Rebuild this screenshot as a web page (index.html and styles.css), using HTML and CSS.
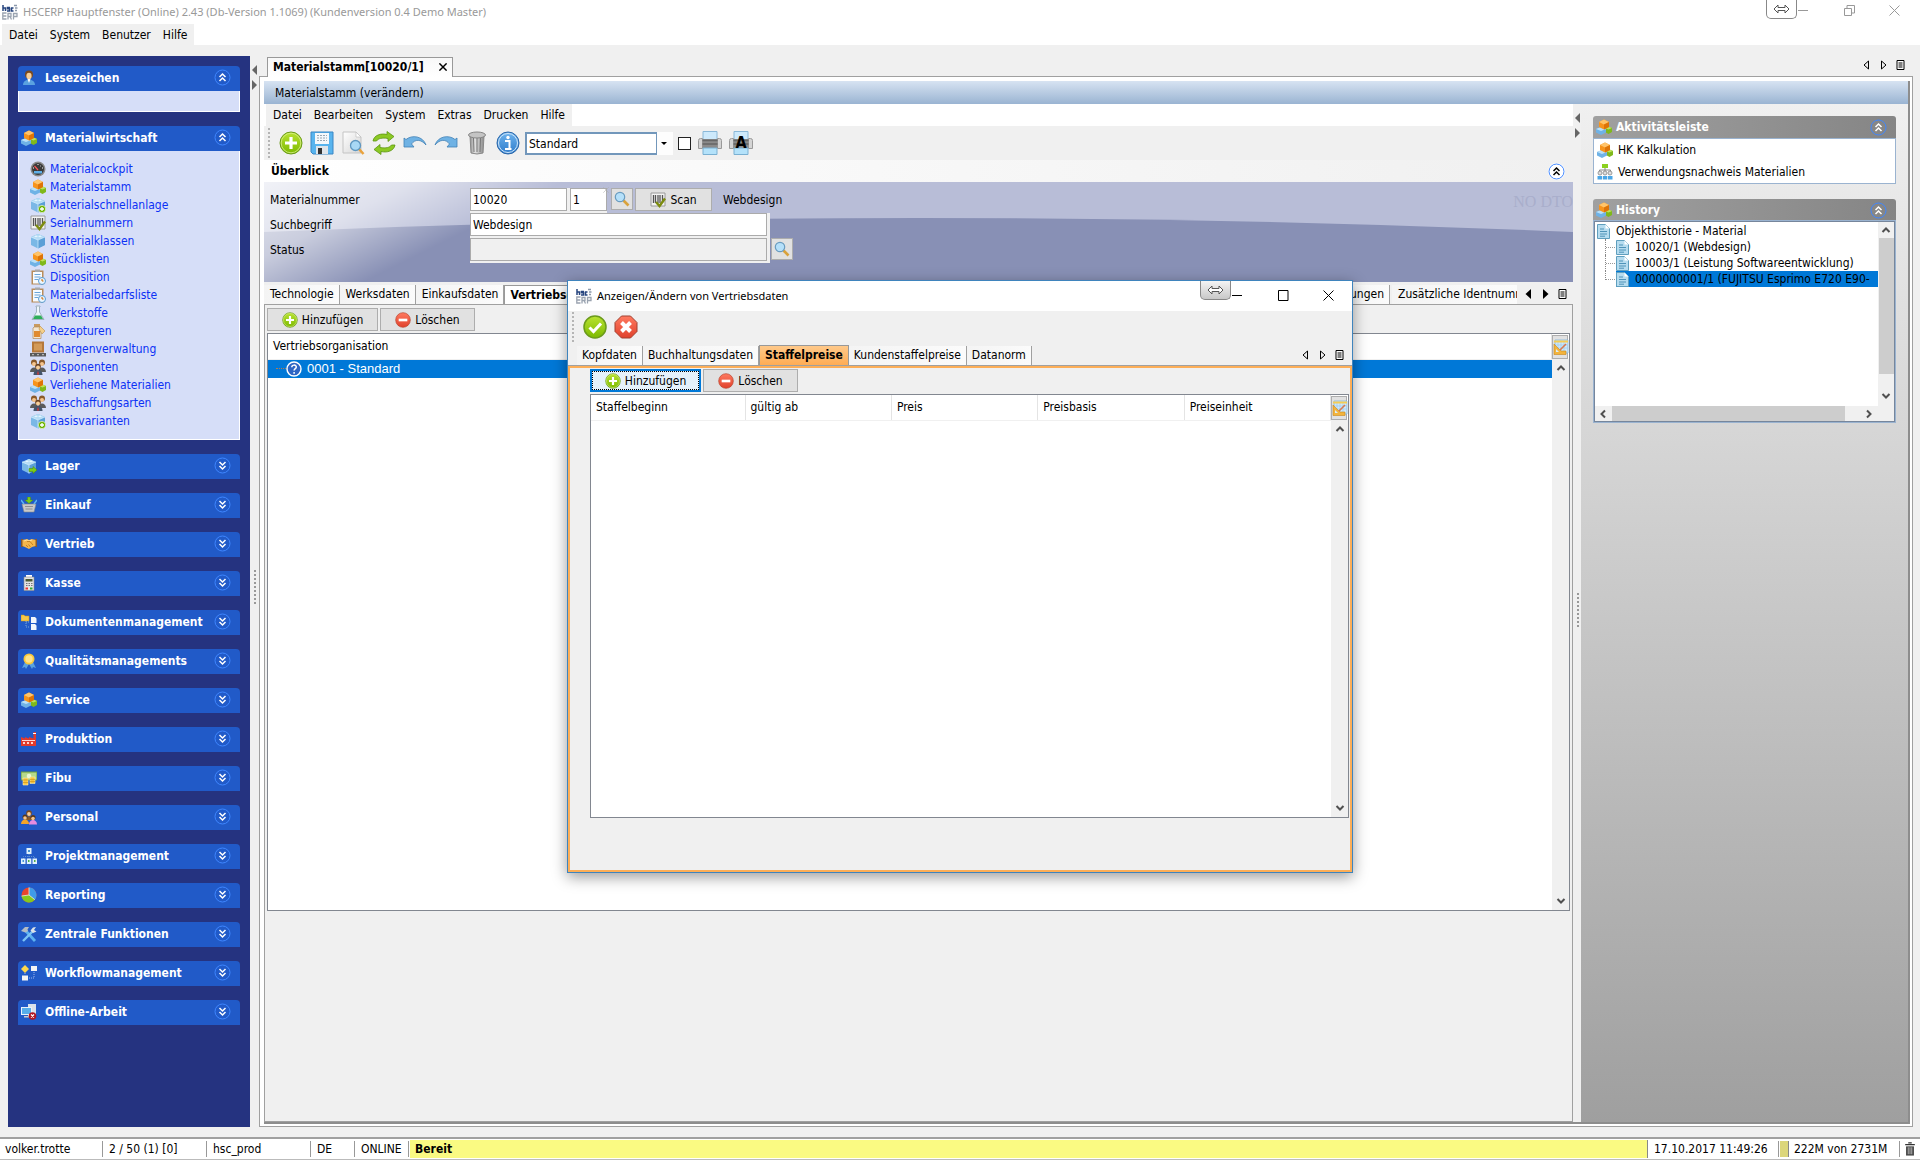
FILE: index.html
```html
<!DOCTYPE html>
<html lang="de">
<head>
<meta charset="utf-8">
<title>HSCERP Hauptfenster</title>
<link rel="stylesheet" href="styles.css">
</head>
<body>
<svg class="defs" width="0" height="0" aria-hidden="true">
  <defs>
    <linearGradient id="gGreen" x1="0" y1="0" x2="0" y2="1"><stop offset="0" stop-color="#b9e332"/><stop offset="1" stop-color="#7cb900"/></linearGradient>
    <linearGradient id="gRed" x1="0" y1="0" x2="0" y2="1"><stop offset="0" stop-color="#ff7a60"/><stop offset="1" stop-color="#e0412c"/></linearGradient>
    <linearGradient id="gBlue" x1="0" y1="0" x2="0" y2="1"><stop offset="0" stop-color="#6fb4ee"/><stop offset="1" stop-color="#2f7ccb"/></linearGradient>
    <linearGradient id="gMetal" x1="0" y1="0" x2="1" y2="0"><stop offset="0" stop-color="#8c8c8c"/><stop offset=".35" stop-color="#e4e4e4"/><stop offset="1" stop-color="#8a8a8a"/></linearGradient>
    <linearGradient id="gPage" x1="0" y1="0" x2="1" y2="1"><stop offset="0" stop-color="#fff"/><stop offset="1" stop-color="#d5d5d5"/></linearGradient>
    <linearGradient id="gFade" gradientUnits="userSpaceOnUse" x1="0" y1="0" x2="60" y2="120"><stop offset="0" stop-color="#fff" stop-opacity=".8"/><stop offset=".5" stop-color="#fff" stop-opacity=".55"/><stop offset="1" stop-color="#fff" stop-opacity="0"/></linearGradient>
  </defs>
  <symbol id="cube" viewBox="0 0 16 16"><path d="M1 4l7-3 7 3v8l-7 3.500-7-3.500z" fill="#7ab8e6"/><path d="M1 4l7-3 7 3-7 3z" fill="#b5dcf5"/><path d="M8 7l7-3v8l-7 3.500z" fill="#5b9fd6"/><path d="M1 4l7 3v8.500M8 7l7-3" stroke="#d9f0ff" stroke-width=".7" fill="none"/><path d="M4 3.500l2-1 2 .8-2 1zM8 3.500l2-1 2 .8-2 1z" fill="#e4f5ff"/></symbol>
  <symbol id="blocks" viewBox="0 0 16 16"><path d="M9 9l3.500-1.500L16 9v4l-3.500 2L9 13z" fill="#7fb81c"/><path d="M9 9l3.500-1.500L16 9l-3.500 1.500z" fill="#bde35a"/><path d="M0 10l5-2 5 2v3.500L5 16l-5-2.500z" fill="#6fb2e6"/><path d="M0 10l5-2 5 2-5 2z" fill="#b9e0f8"/><path d="M3 3l5-2.500L13 3v5l-5 2.500L3 8z" fill="#f7941d"/><path d="M3 3l5-2.500L13 3 8 5.500z" fill="#ffc46b"/><path d="M8 5.500L13 3v5l-5 2.500z" fill="#dd7408"/></symbol>
  <symbol id="cubeplus" viewBox="0 0 16 16"><use href="#cube"/><circle cx="12" cy="12" r="3.700" fill="#6cb300" stroke="#fff" stroke-width=".6"/><path d="M12 10v4M10 12h4" stroke="#fff" stroke-width="1.300"/></symbol>
  <symbol id="cubearrow" viewBox="0 0 16 16"><use href="#cube"/><path d="M8 10.500h4V8.500L16 12l-4 3.500v-2H8z" fill="#7ccc1a" stroke="#4c8a00" stroke-width=".5"/></symbol>
  <symbol id="gauge" viewBox="0 0 16 16"><circle cx="8" cy="8" r="7.500" fill="#8a8a8a"/><circle cx="8" cy="8" r="6" fill="#3a3a3a"/><path d="M4 10h8v2.500H4z" fill="#5fb0e8"/><path d="M8 9L4.500 5" stroke="#f55" stroke-width="1.200"/><path d="M3 7h1M12 7h1M8 3v1M11 4.500l-.6.600" stroke="#fff"/></symbol>
  <symbol id="barcode" viewBox="0 0 16 16"><path d="M1 1h14v13H1z" fill="#f3f3f3" stroke="#9a9a9a"/><path d="M3.500 3v8M5.500 3v8M8 3v8M10 3v8M12.500 3v8" stroke="#555" stroke-width="1.300"/><path d="M6 10l3.500 4L15 6.500" fill="none" stroke="#7d8c10" stroke-width="2.400"/></symbol>
  <symbol id="clip" viewBox="0 0 16 16"><path d="M1.500 1.500h12v14h-12z" fill="#b98d5a"/><path d="M3 3h9v11.500H3z" fill="#f6fbff"/><path d="M5 .5h5V3H5z" fill="#a9a9a9"/><path d="M4.500 5.500h6M4.500 8h6M4.500 10.500h4" stroke="#6aa5d8"/><circle cx="12" cy="12" r="3.500" fill="#eaf6ff" stroke="#5a9bd0"/><path d="M12 10v2h1.500" stroke="#c60" fill="none"/></symbol>
  <symbol id="flask" viewBox="0 0 16 16"><path d="M6 1h4v1H9.500v5L14 14.500H2L6.500 7V2H6z" fill="#eef6fb" stroke="#8fa3b0" stroke-width=".8"/><path d="M5 10.500h6l2 3.500H3z" fill="#2fae5a"/></symbol>
  <symbol id="bottle" viewBox="0 0 16 16"><path d="M4 1h6v3H4z" fill="#c99a60"/><path d="M3 5l1-1h6l1 1v10.500H3z" fill="#f4e6d0" stroke="#b08a5a" stroke-width=".7"/><path d="M4 8h6v6H4z" fill="#e08a30"/><path d="M10 3l5 5-3 3-3-5z" fill="#f3cf8a" stroke="#b98d4a" stroke-width=".6"/></symbol>
  <symbol id="crate" viewBox="0 0 16 16"><path d="M2 .5h12v11H2z" fill="#b5783a"/><path d="M4 2.500h8v7H4z" fill="#d39a58"/><path d="M0 12h16v3.500H0z" fill="#5a5a5a"/><path d="M2 13.700h2M7 13.700h2M12 13.700h2" stroke="#ccc"/></symbol>
  <symbol id="people" viewBox="0 0 16 16"><circle cx="4" cy="3.500" r="3" fill="#8a5a2a"/><circle cx="12" cy="3.500" r="3" fill="#8a5a2a"/><circle cx="4" cy="5" r="2" fill="#f6c58d"/><circle cx="12" cy="5" r="2" fill="#f6c58d"/><path d="M0 13c0-6 8-6 8 0zM8 13c0-6 8-6 8 0z" fill="#5b5b5b"/><circle cx="8" cy="7.500" r="2.800" fill="#6b4220"/><circle cx="8" cy="8.500" r="2" fill="#f8cf9a"/><path d="M3.500 16c0-7 9-7 9 0z" fill="#44546a"/><path d="M8 11.500l1 4H7z" fill="#d33"/></symbol>
  <symbol id="staff" viewBox="0 0 16 16"><circle cx="8" cy="4" r="2.800" fill="#7a4a20"/><circle cx="8" cy="5" r="1.900" fill="#f8cf9a"/><path d="M4 11c0-5 8-5 8 0z" fill="#8a5a2a"/><circle cx="4" cy="8" r="2.500" fill="#5a3818"/><circle cx="4" cy="9" r="1.800" fill="#f6c58d"/><path d="M0 15c0-6 8-6 8 0z" fill="#f2a428"/><circle cx="12" cy="8.500" r="2.500" fill="#5a3818"/><circle cx="12" cy="9.500" r="1.800" fill="#f6c58d"/><path d="M8 15.500c0-6 8-6 8 0z" fill="#e58be0"/></symbol>
  <symbol id="user" viewBox="0 0 16 16"><path d="M2 15c0-7 12-7 12 0z" fill="#5aa2e0"/><path d="M6.500 9h3L8 13z" fill="#fff"/><circle cx="8" cy="4.500" r="4" fill="#7a4a20"/><ellipse cx="8" cy="6" rx="2.600" ry="3.200" fill="#f8cf9a"/></symbol>
  <symbol id="basket" viewBox="0 0 16 16"><path d="M1 7h14l-2 8H3z" fill="#c9c9c9" stroke="#888" stroke-width=".6"/><path d="M4 9.500h8M4.500 12h7" stroke="#8f8f8f"/><path d="M0 3l3 4M16 3l-3 4" stroke="#5cb4f0" stroke-width="1.500"/><path d="M6.500 0h3v3H12L8 6.500 4 3h2.500z" fill="#7ccc1a" stroke="#4c8a00" stroke-width=".4"/></symbol>
  <symbol id="hands" viewBox="0 0 16 16"><path d="M0 3h2v8H0zM14 3h2v8h-2z" fill="#8a5a2a"/><path d="M1.500 4l4.500-1 2 1 3-1 3.500 1v6l-3.500 1-3 2L5 11.500l-3.500-1.500z" fill="#f5b64c"/><path d="M3 5l3-1 2 1 3-1" stroke="#ffe0a0" fill="none"/><path d="M6 5.500h3l3 3.500M5 9l2 2M7.500 8.500L9.500 11" stroke="#b9751a" fill="none" stroke-width=".8"/></symbol>
  <symbol id="till" viewBox="0 0 16 16"><path d="M5 0h6v3H5z" fill="#fff"/><path d="M3 2h10v13.500H3z" fill="#e4e4e4" stroke="#888" stroke-width=".6"/><path d="M4.500 4h7v2.500h-7z" fill="#4c5a35"/><path d="M5 8.500h1.500M7.500 8.500H9M10 8.500h1.500M5 10.500h1.500M7.500 10.500H9M10 10.500h1.500" stroke="#777"/><path d="M4.500 12.500H7v2H4.500z" fill="#e33"/><path d="M9 12.500h2.500v2H9z" fill="#3a3"/></symbol>
  <symbol id="docs" viewBox="0 0 16 16"><path d="M0 1h3l1 1h4v5H0z" fill="#f7c948" stroke="#c9971c" stroke-width=".5"/><path d="M5 7v6h4M5 8h4" stroke="#7aa7d8" stroke-dasharray="1 1" fill="none"/><path d="M10 3h4l1.500 1.500V9H10zM10 10h4l1.500 1.500V16H10z" fill="#f2f6fb"/></symbol>
  <symbol id="medal" viewBox="0 0 16 16"><path d="M4 9L1 15l3-1 1 2 3-5zM12 9l3 6-3-1-1 2-3-5z" fill="#5aa2e0"/><circle cx="8" cy="6" r="5.500" fill="#f9c83a"/><circle cx="8" cy="6" r="3.700" fill="#ffe38a"/></symbol>
  <symbol id="factory" viewBox="0 0 16 16"><path d="M0 15V6l4 1.500V6l4 1.500V6l4.500 1.500V1H15v14z" fill="#e23a2c"/><path d="M1 9.500h13" stroke="#fff" stroke-width=".8"/><path d="M2 11h2v2H2zM6 11h2v2H6zM10 11h2v2h-2z" fill="#ffd2cc"/><path d="M12 2.500h3" stroke="#fff"/></symbol>
  <symbol id="money" viewBox="0 0 16 16"><path d="M0 2h16v8H0z" fill="#b5d98a" stroke="#6b9a3a"/><circle cx="8" cy="6" r="2.300" fill="#e9f6d5"/><path d="M2 8h5v7H2zM9 7h5v6.500H9z" fill="#f6c341" stroke="#fff0b0" stroke-width=".6"/><path d="M2 10h5M2 12.500h5M9 9.500h5M9 11.500h5" stroke="#c98d12" stroke-width=".6"/></symbol>
  <symbol id="tree" viewBox="0 0 16 16"><path d="M8 6v3M2.500 11V8.500h11V11M8 8v3" stroke="#5f8fd0" stroke-dasharray="1 1" fill="none"/><path d="M5.500 0h5v6h-5zM0 10.500h4.500V16H0zM5.800 10.500h4.500V16H5.800zM11.500 10.500H16V16h-4.500z" fill="#dff0fb"/><path d="M7 2h2v2H7zM1.500 12H3v2H1.500z" fill="#4a97d6"/><path d="M7 12h1.500v2H7zM13 12h1.500v2H13z" fill="#4fae4a"/></symbol>
  <symbol id="pie" viewBox="0 0 16 16"><circle cx="8" cy="8" r="7.500" fill="#e8442e"/><path d="M8 8V.5a7.500 7.500 0 015.800 12.200z" fill="#3f9be8"/><path d="M8 8l5.800 4.700A7.500 7.500 0 01.6 9z" fill="#85c81e"/><path d="M8 .5V8l5.800 4.700M8 8L.6 9" stroke="#e8f2e0" stroke-width=".8" fill="none"/></symbol>
  <symbol id="tools" viewBox="0 0 16 16"><path d="M4 4l10 11" stroke="#5db2f0" stroke-width="2.800"/><path d="M12 5L2 15" stroke="#7cc4f5" stroke-width="2.400"/><path d="M0 5l4-4h4L6.500 3.500 7 5 4.500 6.500z" fill="#b4bcc4"/><path d="M15 1l-3 .5-2.500 3L12 7l3.500-1.500L13 4z" fill="#dde3e8"/></symbol>
  <symbol id="flow" viewBox="0 0 16 16"><path d="M4 0l4 4-4 4-4-4z" fill="#ffd84a"/><path d="M10 1h6v5h-6zM1 10.500h6v5H1z" fill="#f4f4f4"/><path d="M4 8v2M13 7v6H8" stroke="#9fb6e8" stroke-dasharray="1 1" fill="none"/></symbol>
  <symbol id="offline" viewBox="0 0 16 16"><path d="M7 0h8v13H7z" fill="#d9e2ea"/><path d="M0 3h11v8H0z" fill="#e9f2fa"/><path d="M1 4h9v6H1z" fill="#58aeea"/><path d="M3 12h5v1.500H3z" fill="#ccc"/><circle cx="11.500" cy="12" r="3.800" fill="#b01722"/><path d="M10 10.500l3 3m0-3l-3 3" stroke="#fff" stroke-width="1.200"/></symbol>
  <symbol id="org" viewBox="0 0 16 16"><path d="M5 0h6v4H5z" fill="#8bd01e"/><path d="M2.500 9V6h11v3M8 4v5" stroke="#888" fill="none"/><circle cx="3" cy="9" r="2" fill="#ddd" stroke="#888" stroke-width=".8"/><circle cx="8" cy="9" r="2" fill="#ddd" stroke="#888" stroke-width=".8"/><circle cx="13" cy="9" r="2" fill="#ddd" stroke="#888" stroke-width=".8"/><path d="M.5 12h4.500v3.500H.5zM5.800 12h4.500v3.500H5.800zM11 12h4.500v3.500H11z" fill="#4aa6e6"/></symbol>
  <symbol id="page" viewBox="0 0 13 15"><path d="M.5.500h8l4 4v10H.5z" fill="#b6dcef" stroke="#5f9fbe"/><path d="M8.500.500v4h4z" fill="#fff"/><path d="M3 5h4M3 7.500h7M3 10h7M3 12.200h5" stroke="#4f93b8"/></symbol>
  <symbol id="up" viewBox="0 0 17 17"><circle cx="8.500" cy="8.500" r="7.500" fill="none" class="ring"/><path d="M5.500 8l3-3 3 3M5.500 12l3-3 3 3" fill="none" stroke="currentColor" stroke-width="1.500"/></symbol>
  <symbol id="down" viewBox="0 0 17 17"><circle cx="8.500" cy="8.500" r="7.500" fill="none" class="ring"/><path d="M5.500 5l3 3 3-3M5.500 9l3 3 3-3" fill="none" stroke="currentColor" stroke-width="1.500"/></symbol>
  <symbol id="plus" viewBox="0 0 24 24"><circle cx="12" cy="12" r="11" fill="url(#gGreen)" stroke="#6b9a1c"/><circle cx="12" cy="12" r="9.800" fill="none" stroke="#d8f08a" stroke-width=".8"/><path d="M12 6v12M6 12h12" stroke="#fff" stroke-width="3.200"/></symbol>
  <symbol id="minus" viewBox="0 0 24 24"><circle cx="12" cy="12" r="11" fill="url(#gRed)" stroke="#b8452f"/><path d="M5.500 12h13" stroke="#fff" stroke-width="4"/></symbol>
  <symbol id="ok" viewBox="0 0 24 24"><circle cx="12" cy="12" r="11" fill="url(#gGreen)" stroke="#6b9a1c" stroke-width="1.500"/><path d="M6.500 12.500l4 4 7.500-8" stroke="#fff" stroke-width="3" fill="none"/></symbol>
  <symbol id="cancel" viewBox="0 0 24 24"><path d="M7.500 1h9L23 7.500v9L16.500 23h-9L1 16.500v-9z" fill="url(#gRed)" stroke="#a04030"/><path d="M7.500 7.500l9 9m0-9l-9 9" stroke="#fff" stroke-width="4"/></symbol>
  <symbol id="save" viewBox="0 0 24 24"><path d="M1 1h22v22H3l-2-2z" fill="#58b4ee" stroke="#3a86c4"/><path d="M5 2h14v11H5z" fill="#f4f8fb"/><path d="M7 4.500h10M7 7h10M7 9.500h10" stroke="#9aa7b3" stroke-dasharray="2 1"/><path d="M6 15h12v8H6z" fill="#dfe5ea"/><path d="M8 17h4v6H8z" fill="#333"/></symbol>
  <symbol id="preview" viewBox="0 0 24 24"><path d="M2 1h13l5 5v16H2z" fill="url(#gPage)" stroke="#c4c4c4"/><path d="M15 1v5h5z" fill="#fff" stroke="#bbb" stroke-width=".6"/><path d="M18 18l4.500 5" stroke="#e9a23c" stroke-width="2.600"/><circle cx="14.500" cy="14.500" r="5" fill="#a8d8f5" stroke="#5f97c0" stroke-width="1.300"/></symbol>
  <symbol id="refresh" viewBox="0 0 24 24"><path d="M1 10c1-6 8-8 14-6.500L15 .5l7 5-6 5V7.500C10 6.500 6 7.500 4.500 10z" fill="#8cc924" stroke="#5c9410" stroke-width=".8"/><path d="M23 14c-1 6-8 8-14 6.500v3l-7-5 6-5v3c6 1 10 0 11.500-2.500z" fill="#8cc924" stroke="#5c9410" stroke-width=".8"/></symbol>
  <symbol id="undo" viewBox="0 0 24 24"><path d="M1 7l2 1.500C9 3.500 20 5 23 14c-5-6-11-6-14.500-1L11 16H1z" fill="#6fb2e4" stroke="#4080b5" stroke-width=".8"/></symbol>
  <symbol id="redo" viewBox="0 0 24 24"><path d="M23 7l-2 1.500C15 3.500 4 5 1 14c5-6 11-6 14.500-1L13 16h10z" fill="#6fb2e4" stroke="#4080b5" stroke-width=".8"/></symbol>
  <symbol id="trash" viewBox="0 0 24 24"><path d="M5 5h14l-1 17q-6 2-12 0z" fill="url(#gMetal)" stroke="#888"/><path d="M8.500 7l.5 14M12 7v14M15.500 7L15 21" stroke="#777" stroke-width="1"/><ellipse cx="12" cy="4" rx="8.500" ry="3" fill="#c4c4c4" stroke="#858585"/></symbol>
  <symbol id="bin" viewBox="0 0 12 16"><path d="M1.500 5h9v10.500h-9z" fill="#444"/><path d="M4 6v8M6 6v8M8 6v8" stroke="#ccc" stroke-width=".9"/><path d="M.5 3h11M4 1h4" stroke="#333" stroke-width="1.600"/></symbol>
  <symbol id="info" viewBox="0 0 24 24"><circle cx="12" cy="12" r="11" fill="url(#gBlue)" stroke="#2a66a8"/><circle cx="12" cy="12" r="9.500" fill="none" stroke="#cfe6fa"/><circle cx="12" cy="6.500" r="1.700" fill="#fff"/><path d="M9 10h4.500v7.500M9 18h6.500" stroke="#fff" stroke-width="2" fill="none"/></symbol>
  <symbol id="print" viewBox="0 0 24 24"><path d="M5 .5h14v9H5z" fill="#cde9fb" stroke="#8ab8d8"/><path d="M.5 9.500q0-2 2-2h2v10h-4zM23.500 9.500q0-2-2-2h-2v10h4z" fill="#d4d4d4" stroke="#9a9a9a"/><path d="M4.500 8h15v9h-15z" fill="#8a8a8a"/><path d="M4.500 9.500h15M4.500 13h15" stroke="#666" stroke-width="1.500"/><path d="M5 17h14v6.500H5z" fill="#b4e2fa" stroke="#7ab0d2"/></symbol>
  <symbol id="search" viewBox="0 0 16 16"><path d="M9.500 9.500l5 5" stroke="#d9a23c" stroke-width="2.600"/><circle cx="6" cy="6" r="4.700" fill="#b5e0fa" stroke="#6a9cc0" stroke-width="1.200"/></symbol>
  <symbol id="help" viewBox="0 0 16 16"><circle cx="8" cy="8" r="7" fill="#2f66c4" stroke="#fff" stroke-width="1.400"/><path d="M5.800 6.300C5.800 3.400 10.300 3.500 10.300 6c0 1.700-2.200 1.700-2.200 3.600M8.100 11v1.700" stroke="#fff" stroke-width="1.500" fill="none"/></symbol>
  <symbol id="config" viewBox="0 0 16 16"><path d="M2 1h13v13H2z" fill="#cfe8fa" stroke="#7fb3dc" stroke-width=".8"/><path d="M5 3v10M8 3v10M11 3v10M2 6h13M2 9h13" stroke="#9fcbea" stroke-width=".7"/><path d="M1 2.500h14" stroke="#f5cd54" stroke-width="2"/><path d="M1 5l7 7h5v3.500H1z" fill="#f3b43c" stroke="#c9861a" stroke-width=".6"/><path d="M3 10l3 3H3z" fill="#dbeefa"/><path d="M7 11l6-6" stroke="#d87a50" stroke-width="1.600"/></symbol>
  <symbol id="logo" viewBox="0 0 16 16"><path d="M1 1v6M1 4h2.500v3M8 3.500H5.500v1.300h2V7H5M11.500 4H9.500v3h2" stroke="#27457f" stroke-width="1.500" fill="none"/><path d="M12 1.500h3M13 4h2.500M13 6.500h2" stroke="#8c99ab" stroke-width="1.300"/><path d="M4.500 9H.8v6h3.700M.8 12h3.500M6 15.500V9.500h3v3H6M8 12.500l1.500 3M11.500 15.500V9.500h3.500v3h-3.500" stroke="#9aa3b0" stroke-width="1.300" fill="none"/></symbol>
  <symbol id="swap" viewBox="0 0 17 10"><path d="M1 5l4-4v2.500h7V1l4 4-4 4V6.500H5V9z" fill="#fff" stroke="#555"/></symbol>
  <symbol id="prevo" viewBox="0 0 8 10"><path d="M6 1v8L1.500 5z" fill="none" stroke="#000"/></symbol>
  <symbol id="nexto" viewBox="0 0 8 10"><path d="M2 1v8l4.500-4z" fill="none" stroke="#000"/></symbol>
  <symbol id="prev" viewBox="0 0 8 10"><path d="M6.500 0v10L1 5z"/></symbol>
  <symbol id="next" viewBox="0 0 8 10"><path d="M1.500 0v10L7 5z"/></symbol>
  <symbol id="list" viewBox="0 0 8 10"><path d="M.5.500h7v9h-7z" fill="#fff" stroke="#000"/><path d="M2 3h4M2 5h4M2 7h4" stroke="#000"/></symbol>
  <symbol id="au" viewBox="0 0 10 10"><path d="M1.500 7L5 3.500 8.500 7" fill="none" stroke="#505050" stroke-width="2"/></symbol>
  <symbol id="ad" viewBox="0 0 10 10"><path d="M1.500 3L5 6.500 8.500 3" fill="none" stroke="#505050" stroke-width="2"/></symbol>
  <symbol id="al" viewBox="0 0 10 10"><path d="M7 1.500L3.500 5 7 8.500" fill="none" stroke="#505050" stroke-width="2"/></symbol>
  <symbol id="ar" viewBox="0 0 10 10"><path d="M3 1.500L6.500 5 3 8.500" fill="none" stroke="#505050" stroke-width="2"/></symbol>
  <symbol id="wmin" viewBox="0 0 11 11"><path d="M0 5.500h10" stroke="currentColor"/></symbol>
  <symbol id="wmax" viewBox="0 0 11 11"><path d="M.5.500h9.500v10H.5z" fill="none" stroke="currentColor"/></symbol>
  <symbol id="wres" viewBox="0 0 11 11"><path d="M.5 3.500h7v7h-7zM3 3V.500h7.500V8H8" fill="none" stroke="currentColor"/></symbol>
  <symbol id="wclose" viewBox="0 0 11 11"><path d="M.5.500l10 10m0-10l-10 10" stroke="currentColor"/></symbol>
</svg>

<header class="titlebar">
  <svg class="i16"><use href="#logo"/></svg>
  <h1>HSCERP Hauptfenster (Online) 2.43 (Db-Version 1.1069) (Kundenversion 0.4 Demo Master)</h1>
  <div class="wbtns">
    <button class="swap" aria-label="Verschieben"><svg><use href="#swap"/></svg></button>
    <button class="wb" aria-label="Minimieren"><svg><use href="#wmin"/></svg></button>
    <button class="wb" aria-label="Wiederherstellen"><svg><use href="#wres"/></svg></button>
    <button class="wb" aria-label="Schließen"><svg><use href="#wclose"/></svg></button>
  </div>
</header>
<nav class="menu mainmenu"><div class="menu-in"><button>Datei</button><button>System</button><button>Benutzer</button><button>Hilfe</button></div></nav>

<main class="work">
  <aside class="side">
    <section class="sec open"><button class="sh"><svg class="i16"><use href="#user"/></svg><span>Lesezeichen</span><svg class="chev"><use href="#up"/></svg></button><div class="sb empty"></div></section>
    <section class="sec open"><button class="sh"><svg class="i16"><use href="#blocks"/></svg><span>Materialwirtschaft</span><svg class="chev"><use href="#up"/></svg></button>
      <div class="sb links">
        <a href="#"><svg class="i16"><use href="#gauge"/></svg>Materialcockpit</a>
        <a href="#"><svg class="i16"><use href="#blocks"/></svg>Materialstamm</a>
        <a href="#"><svg class="i16"><use href="#cubeplus"/></svg>Materialschnellanlage</a>
        <a href="#"><svg class="i16"><use href="#barcode"/></svg>Serialnummern</a>
        <a href="#"><svg class="i16"><use href="#cube"/></svg>Materialklassen</a>
        <a href="#"><svg class="i16"><use href="#blocks"/></svg>Stücklisten</a>
        <a href="#"><svg class="i16"><use href="#clip"/></svg>Disposition</a>
        <a href="#"><svg class="i16"><use href="#clip"/></svg>Materialbedarfsliste</a>
        <a href="#"><svg class="i16"><use href="#flask"/></svg>Werkstoffe</a>
        <a href="#"><svg class="i16"><use href="#bottle"/></svg>Rezepturen</a>
        <a href="#"><svg class="i16"><use href="#crate"/></svg>Chargenverwaltung</a>
        <a href="#"><svg class="i16"><use href="#people"/></svg>Disponenten</a>
        <a href="#"><svg class="i16"><use href="#blocks"/></svg>Verliehene Materialien</a>
        <a href="#"><svg class="i16"><use href="#people"/></svg>Beschaffungsarten</a>
        <a href="#"><svg class="i16"><use href="#cubeplus"/></svg>Basisvarianten</a>
      </div></section>
    <section class="sec"><button class="sh"><svg class="i16"><use href="#cubearrow"/></svg><span>Lager</span><svg class="chev"><use href="#down"/></svg></button></section>
    <section class="sec"><button class="sh"><svg class="i16"><use href="#basket"/></svg><span>Einkauf</span><svg class="chev"><use href="#down"/></svg></button></section>
    <section class="sec"><button class="sh"><svg class="i16"><use href="#hands"/></svg><span>Vertrieb</span><svg class="chev"><use href="#down"/></svg></button></section>
    <section class="sec"><button class="sh"><svg class="i16"><use href="#till"/></svg><span>Kasse</span><svg class="chev"><use href="#down"/></svg></button></section>
    <section class="sec"><button class="sh"><svg class="i16"><use href="#docs"/></svg><span>Dokumentenmanagement</span><svg class="chev"><use href="#down"/></svg></button></section>
    <section class="sec"><button class="sh"><svg class="i16"><use href="#medal"/></svg><span>Qualitätsmanagements</span><svg class="chev"><use href="#down"/></svg></button></section>
    <section class="sec"><button class="sh"><svg class="i16"><use href="#blocks"/></svg><span>Service</span><svg class="chev"><use href="#down"/></svg></button></section>
    <section class="sec"><button class="sh"><svg class="i16"><use href="#factory"/></svg><span>Produktion</span><svg class="chev"><use href="#down"/></svg></button></section>
    <section class="sec"><button class="sh"><svg class="i16"><use href="#money"/></svg><span>Fibu</span><svg class="chev"><use href="#down"/></svg></button></section>
    <section class="sec"><button class="sh"><svg class="i16"><use href="#staff"/></svg><span>Personal</span><svg class="chev"><use href="#down"/></svg></button></section>
    <section class="sec"><button class="sh"><svg class="i16"><use href="#tree"/></svg><span>Projektmanagement</span><svg class="chev"><use href="#down"/></svg></button></section>
    <section class="sec"><button class="sh"><svg class="i16"><use href="#pie"/></svg><span>Reporting</span><svg class="chev"><use href="#down"/></svg></button></section>
    <section class="sec"><button class="sh"><svg class="i16"><use href="#tools"/></svg><span>Zentrale Funktionen</span><svg class="chev"><use href="#down"/></svg></button></section>
    <section class="sec"><button class="sh"><svg class="i16"><use href="#flow"/></svg><span>Workflowmanagement</span><svg class="chev"><use href="#down"/></svg></button></section>
    <section class="sec"><button class="sh"><svg class="i16"><use href="#offline"/></svg><span>Offline-Arbeit</span><svg class="chev"><use href="#down"/></svg></button></section>
  </aside>

  <div class="split left"><i class="tri l"></i><i class="tri r"></i><i class="dots"></i></div>

  <div class="docs">
    <div class="doctabs"><button class="doctab">Materialstamm[10020/1] <svg class="x"><use href="#wclose"/></svg></button>
      <span class="nav"><svg class="n"><use href="#prevo"/></svg><svg class="n"><use href="#nexto"/></svg><svg class="n"><use href="#list"/></svg></span></div>
    <div class="frame"><div class="inner">
      <h2 class="doctitle">Materialstamm (verändern)</h2>
      <div class="cols">
        <div class="center">
          <nav class="menu"><div class="menu-in"><button>Datei</button><button>Bearbeiten</button><button>System</button><button>Extras</button><button>Drucken</button><button>Hilfe</button></div></nav>
          <div class="tools">
            <i class="grip"></i>
            <button aria-label="Neu"><svg><use href="#plus"/></svg></button>
            <button aria-label="Speichern"><svg><use href="#save"/></svg></button>
            <button aria-label="Vorschau"><svg><use href="#preview"/></svg></button>
            <button aria-label="Aktualisieren"><svg><use href="#refresh"/></svg></button>
            <button aria-label="Rückgängig"><svg><use href="#undo"/></svg></button>
            <button aria-label="Wiederholen"><svg><use href="#redo"/></svg></button>
            <button aria-label="Löschen"><svg><use href="#trash"/></svg></button>
            <button aria-label="Info"><svg><use href="#info"/></svg></button>
            <div class="combo"><select aria-label="Ansicht"><option>Standard</option></select></div>
            <input type="checkbox" class="cb" aria-label="Direktdruck">
            <button class="pr" aria-label="Drucken"><svg><use href="#print"/></svg></button>
            <button class="pr" aria-label="Automatisch drucken"><svg><use href="#print"/></svg><b>A</b></button>
          </div>
          <div class="overview"><h3>Überblick</h3><svg class="chev dark"><use href="#up"/></svg></div>
          <form class="form">
            <svg class="swoosh" viewBox="0 0 1308 100" preserveAspectRatio="none"><path d="M0 50Q654 22 1308 50V100H0z" fill="#8890b5"/><path d="M0 0h400v100H0z" fill="url(#gFade)"/></svg>
            <span class="nodto">NO DTO</span>
            <div class="row"><label for="mnr">Materialnummer</label><div class="wrap"><input id="mnr" class="w97" value="10020"><input class="w37" aria-label="Index" value="1"><svg class="xb"><use href="#wclose"/></svg></div><button type="button" class="sq" aria-label="Suchen"><svg class="i16"><use href="#search"/></svg></button><button type="button" class="btn scan"><svg class="i16"><use href="#barcode"/></svg>Scan</button><span class="desc">Webdesign</span></div>
            <div class="row"><label for="such">Suchbegriff</label><div class="wrap wide"><input id="such" class="w297" value="Webdesign"></div></div>
            <div class="row"><label for="stat">Status</label><div class="wrap wide"><input id="stat" class="w297 ro" readonly></div><button type="button" class="sq" aria-label="Status suchen"><svg class="i16"><use href="#search"/></svg></button></div>
          </form>
          <div class="tabs">
            <button class="tab">Technologie</button><button class="tab">Werksdaten</button><button class="tab">Einkaufsdaten</button><button class="tab on">Vertriebsdaten</button><span class="fill"></span><button class="tab">ungen</button><button class="tab cut">Zusätzliche Identnummern</button>
            <span class="nav"><svg class="n"><use href="#prev"/></svg><svg class="n"><use href="#next"/></svg><svg class="n"><use href="#list"/></svg></span>
          </div>
          <div class="pane">
            <div class="btns"><button class="btn add"><svg class="i16"><use href="#plus"/></svg>Hinzufügen</button><button class="btn del"><svg class="i16"><use href="#minus"/></svg>Löschen</button></div>
            <div class="grid">
              <div class="gmain"><table><thead><tr><th>Vertriebsorganisation</th></tr></thead><tbody><tr class="sel"><td><div class="node"><i></i><svg class="i16"><use href="#help"/></svg>0001 - Standard</div></td></tr></tbody></table></div>
              <div class="gbar"><button class="cfg" aria-label="Spalten"><svg class="i16"><use href="#config"/></svg></button><div class="vs"><svg class="a"><use href="#au"/></svg><svg class="a"><use href="#ad"/></svg></div></div>
            </div>
            <div class="rest"></div>
          </div>
        </div>
        <div class="split mid"><i class="tri l"></i><i class="tri r"></i><i class="dots"></i></div>
        <aside class="right">
          <section class="card"><header><svg class="i16"><use href="#blocks"/></svg><h3>Aktivitätsleiste</h3><svg class="chev"><use href="#up"/></svg></header>
            <div class="cbody"><a href="#"><svg class="i16"><use href="#blocks"/></svg>HK Kalkulation</a><a href="#"><svg class="i16"><use href="#org"/></svg>Verwendungsnachweis Materialien</a></div></section>
          <section class="card"><header><svg class="i16"><use href="#blocks"/></svg><h3>History</h3><svg class="chev"><use href="#up"/></svg></header>
            <div class="hist">
              <ul class="htree"><li><svg class="pg"><use href="#page"/></svg>Objekthistorie - Material</li>
                <li class="c"><i></i><span><svg class="pg"><use href="#page"/></svg>10020/1 (Webdesign)</span></li>
                <li class="c"><i></i><span><svg class="pg"><use href="#page"/></svg>10003/1 (Leistung Softwareentwicklung)</span></li>
                <li class="c s"><i></i><span><svg class="pg"><use href="#page"/></svg>0000000001/1 (FUJITSU Esprimo E720 E90-</span></li></ul>
              <div class="hv"><svg class="a"><use href="#au"/></svg><i class="vthumb"></i><svg class="a"><use href="#ad"/></svg></div>
              <div class="hh"><svg class="a"><use href="#al"/></svg><i class="hthumb"></i><svg class="a"><use href="#ar"/></svg></div>
            </div></section>
        </aside>
      </div>
    </div></div>
  </div>
</main>

<footer class="status">
  <span class="s1">volker.trotte</span><span class="s2">2 / 50 (1) [0]</span><span class="s2">hsc_prod</span><span class="s3">DE</span><span class="s4">ONLINE</span><strong>Bereit</strong><span class="s5">17.10.2017 11:49:26</span><span class="s6">222M von 2731M</span><button aria-label="Speicher freigeben"><svg class="bin"><use href="#bin"/></svg></button>
</footer>

<section class="dialog" role="dialog" aria-labelledby="dlgtitle">
  <header class="dtitle"><svg class="i16"><use href="#logo"/></svg><h2 id="dlgtitle">Anzeigen/Ändern von Vertriebsdaten</h2>
    <div class="wbtns"><button class="swap" aria-label="Verschieben"><svg><use href="#swap"/></svg></button><button class="wb" aria-label="Minimieren"><svg><use href="#wmin"/></svg></button><button class="wb" aria-label="Maximieren"><svg><use href="#wmax"/></svg></button><button class="wb" aria-label="Schließen"><svg><use href="#wclose"/></svg></button></div></header>
  <div class="tools dtools"><i class="grip"></i><button aria-label="OK"><svg><use href="#ok"/></svg></button><button aria-label="Abbrechen"><svg><use href="#cancel"/></svg></button></div>
  <div class="tabs dtabs"><button class="tab">Kopfdaten</button><button class="tab">Buchhaltungsdaten</button><button class="tab on">Staffelpreise</button><button class="tab">Kundenstaffelpreise</button><button class="tab">Datanorm</button><span class="fill"></span>
    <span class="nav"><svg class="n"><use href="#prevo"/></svg><svg class="n"><use href="#nexto"/></svg><svg class="n"><use href="#list"/></svg></span></div>
  <div class="dbody">
    <div class="btns"><button class="btn add focus"><svg class="i16"><use href="#plus"/></svg>Hinzufügen</button><button class="btn del"><svg class="i16"><use href="#minus"/></svg>Löschen</button></div>
    <div class="grid">
      <div class="gmain"><table class="prices"><thead><tr><th class="first">Staffelbeginn</th><th>gültig ab</th><th>Preis</th><th>Preisbasis</th><th>Preiseinheit</th></tr></thead></table></div>
      <div class="gbar"><button class="cfg" aria-label="Spalten"><svg class="i16"><use href="#config"/></svg></button><div class="vs"><svg class="a"><use href="#au"/></svg><svg class="a"><use href="#ad"/></svg></div></div>
    </div>
  </div>
</section>
</body>
</html>
```
FILE: styles.css
```css
* { box-sizing: border-box; }
body {
  margin: 0;
  min-height: 100vh;
  display: flex;
  flex-direction: column;
  position: relative;
  background: #f0f0f0;
  color: #000;
  font: 12px/16px "DejaVu Sans Condensed", "DejaVu Sans", sans-serif;
}
button, input, select { font: inherit; color: inherit; margin: 0; border-radius: 0; }
button { border: 0; background: none; padding: 0; white-space: nowrap; }
h1, h2, h3, ul { margin: 0; padding: 0; font: inherit; }
a { text-decoration: none; color: inherit; }
svg { display: block; flex: none; }
.defs { position: absolute; }
.i16 { width: 16px; height: 16px; }

/* Window title bars */
.titlebar { display: flex; height: 24px; background: #fff; color: #999; padding-left: 2px; }
.titlebar > .i16 { margin-top: 4px; }
.titlebar h1, .dtitle h2 { font: 11px/24px "Noto Sans", sans-serif; margin-left: 5px; }
.wbtns { display: flex; margin-left: auto; align-items: flex-start; }
.swap { width: 31px; height: 19px; border: 1px solid #888; border-top: 0; border-radius: 0 0 5px 5px; background: #fff; display: grid; place-items: center; }
.swap svg { width: 17px; height: 10px; }
.wb { width: 45px; height: 21px; display: grid; place-items: center; }
.wb svg { width: 11px; height: 11px; }
.wb:nth-child(2) { width: 13px; }
.wb:nth-child(3) { margin-left: 17px; }
.titlebar .wb:nth-child(4) { margin-right: 3px; }

.menu { background: #fff; height: 22px; display: flex; padding-left: 2px; }
.menu-in { background: #f0f0f0; display: flex; gap: 12px; padding: 0 7px; }
.mainmenu { height: 21px; }

/* Work area */
.work { flex: 1; display: flex; padding: 11px 6px 10px 8px; }
.side { width: 242px; flex: none; background: #253380; padding: 10px; display: flex; flex-direction: column; gap: 14px; }
.sh { width: 100%; height: 25px; display: flex; align-items: center; background: #215ac8; color: #fff; font-weight: bold; border-radius: 4px 4px 0 0; padding: 0 9px 2px 3px; text-align: left; }
.sh span { flex: 1; margin-left: 8px; }
.chev { width: 17px; height: 17px; }
.ring { stroke: #3f86ff; }
.sb { background: #d6def8; border: 1px solid #fff; border-top: 0; }
.empty { height: 21px; }
.links { padding: 9px 0 9px 11px; color: #0c31f5; }
.links a { display: flex; height: 18px; align-items: center; gap: 4px; }

.split { flex: none; position: relative; }
.left { width: 9px; }
.mid { width: 8px; }
.tri { position: absolute; left: 2px; border: 5px solid transparent; }
.tri.l { border-right-color: #666; border-left-width: 0; top: 9px; }
.tri.r { border-left-color: #666; border-right-width: 0; top: 24px; }
.dots { position: absolute; left: 4px; top: 48%; width: 2px; height: 34px; background: repeating-linear-gradient(#999 0 2px, transparent 2px 4px); }

/* Document area */
.docs { flex: 1; min-width: 0; display: flex; flex-direction: column; }
.doctabs { height: 20px; display: flex; align-items: flex-end; padding-left: 8px; position: relative; z-index: 1; margin-top: 1px; }
.doctab { height: 20px; border: 1px solid #999; border-bottom: 0; background: linear-gradient(#f8f8f8, #fff); font-weight: bold; padding: 0 5px 2px; display: flex; align-items: center; gap: 15px; }
.x { width: 8px; height: 8px; stroke-width: 2px; }
.doctabs .nav { margin: 0 9px 7px auto; align-self: flex-end; }
.nav { display: flex; gap: 8px; align-items: center; }
.n { width: 9px; height: 10px; }
.frame { flex: 1; border: 1px solid #a0a0a0; background: #fff; padding: 4px 2px 2px 4px; display: flex; margin-right: 1px; margin-top: -1px; }
.inner { flex: 1; min-width: 0; border: 2px solid #8d8d8d; border-width: 0 2px 2px 0; background: #f0f0f0; display: flex; flex-direction: column; }
.doctitle { height: 23px; line-height: 24px; padding-left: 11px; background: linear-gradient(#d7e3f2, #9ab4d2); }
.cols { flex: 1; display: flex; }
.center { flex: 1; min-width: 0; display: flex; flex-direction: column; }
.center > .menu .menu-in { gap: 12px; line-height: 18px; }

.tools { height: 34px; display: flex; align-items: center; padding: 0 0 0 4px; gap: 7px; }
.tools button { width: 24px; height: 24px; }
.tools button svg { width: 24px; height: 24px; }
.grip { width: 3px; height: 30px; margin-right: 1px; background: repeating-linear-gradient(#b5b5b5 0 2px, transparent 2px 4px); background-size: 2px 100%; background-repeat: no-repeat; }
.combo { width: 148px; height: 23px; position: relative; margin-left: -2px; background: #fdfdfd; }
.combo select { appearance: none; width: 132px; height: 23px; border: 2px solid #7297bb; border-right-width: 1px; background: #fff; padding: 1px 2px 0; }
.combo::after { content: ""; position: absolute; right: 6px; top: 10px; border: 3px solid transparent; border-top-color: #000; border-bottom: 0; }
.cb { appearance: none; width: 13px; height: 13px; border: 1px solid #222; background: #fff; margin-left: -2px; }
.tools .pr { position: relative; }
.tools .pr b { position: absolute; inset: 0; font-size: 16px; line-height: 24px; }

.overview { height: 22px; display: flex; align-items: center; justify-content: space-between; padding: 0 8px 0 7px; background: linear-gradient(90deg, #fff, #f0f0f0); }
.overview h3 { font-weight: bold; }
.dark { background: #fff; border-radius: 9px; }
.overview .ring { stroke: #aaa; }

.form { height: 100px; position: relative; background: #b8bdd7; padding: 6px 0 0 6px; display: flex; flex-direction: column; overflow: hidden; }
.swoosh { position: absolute; inset: 0; width: 100%; height: 100%; }
.nodto { position: absolute; right: 0; top: 12px; font: 16px/16px "Liberation Serif", serif; color: #a9aecb; }
.row { position: relative; height: 25px; display: flex; align-items: flex-start; }
.row label { width: 200px; line-height: 24px; }
.wrap { display: flex; gap: 3px; position: relative; height: 25px; background: #f0f0f0; }
.wide { width: 300px; }
.row input { height: 23px; border: 1px solid #ababab; outline: 0; background: #fff; padding: 1px 2px 0; }
.w97 { width: 97px; }
.w37 { width: 37px; }
.w297 { width: 297px; }
.row .ro { background: #f0f0f0; }
.xb { position: absolute; right: -2px; top: -1px; width: 6px; height: 6px; color: #aaa; }
.sq { width: 22px; height: 22px; margin-left: 4px; background: #e1e1e1; border: 1px solid #adadad; display: grid; place-items: center; }
.wide + .sq { margin-left: 1px; }
.btn { height: 23px; background: #e1e1e1; border: 1px solid #adadad; display: flex; align-items: center; justify-content: center; gap: 4px; }
.scan { width: 77px; margin-left: 2px; }
.desc { margin-left: 11px; line-height: 24px; }

.tabs { height: 23px; display: flex; align-items: flex-end; border-bottom: 1px solid #a0a0a0; }
.tab { height: 19px; line-height: 17px; padding: 0 5px; border-right: 1px solid #a0a0a0; background: linear-gradient(90deg, #f4f4f4, #fbfbfb); }
.center .tab { padding-left: 6px; }
.tab.on { font-weight: bold; background: #f0f0f0; border: 1px solid #999; border-bottom: 0; }
.center .tabs .on { background: #fff; padding-left: 5px; }
.tabs .cut { width: 125px; overflow: hidden; border-right: 0; margin-left: 2px; text-align: left; }
.fill { flex: 1; }
.tabs .nav { margin: 0 8px 5px 7px; }
.center .tabs .nav { margin-right: 6px; }
.pane { flex: 1; display: flex; flex-direction: column; border: 1px solid #a0a0a0; border-top: 0; padding: 3px 2px 0; }
.btns { display: flex; gap: 2px; }
.add { width: 111px; }
.del { width: 95px; }
.grid { flex: 11 1 0; display: flex; margin-top: 2px; border: 1px solid #828790; background: #fff; }
.rest { flex: 4 1 0; }
.gmain { flex: 1; min-width: 0; }
.gbar { width: 17px; flex: none; display: flex; flex-direction: column; }
table { width: 100%; border-collapse: collapse; table-layout: fixed; }
th { text-align: left; font-weight: normal; height: 25px; padding: 0 5px; border-right: 1px solid #e4e4e4; border-bottom: 1px solid #f0f0f0; }
td { height: 18px; padding: 0; }
.sel { background: #0078d7; color: #fff; }
.node { display: flex; align-items: center; font: 13px/18px "Liberation Sans", sans-serif; padding-left: 8px; }
.node i { width: 10px; border-top: 1px dotted #b07a50; }
.node svg { margin-right: 5px; }
.cfg { width: 16px; height: 24px; margin: 1px 0 0; border: 1px solid #adadad; background: #e1e1e1; display: grid; place-items: center; }
.vs { flex: 1; background: #f0f0f0; display: flex; flex-direction: column; justify-content: space-between; align-items: center; padding: 4px 0; }
.a { width: 10px; height: 10px; }

/* Right panel */
.right { width: 327px; flex: none; padding: 12px; background: linear-gradient(#f0f0f0, #9f9f9f); display: flex; flex-direction: column; gap: 15px; }
.card header { height: 22px; display: flex; align-items: center; padding: 0 9px 0 3px; gap: 4px; background: linear-gradient(90deg, #a0a0a0, #858585); color: #fff; border-radius: 3px 3px 0 0; }
.card h3 { flex: 1; font-weight: bold; }
.right .ring { stroke: #bbb; }
.card .chev { color: #fff; }
.cbody { border: 1px solid #9ab3d0; background: #fff; }
.cbody a { display: flex; height: 22px; align-items: center; gap: 5px; padding-left: 3px; }
.hist { display: grid; grid-template: 184px 15px / 1fr 16px; border: 1px solid #76869c; outline: 1px solid #9ab3d0; background: #f0f0f0; margin: 0 1px 1px; }
.htree { list-style: none; background: #fff; overflow: hidden; padding: 1px 0 0 2px; }
.htree li { height: 16px; display: flex; align-items: center; gap: 6px; white-space: nowrap; }
.pg { width: 13px; height: 15px; }
.htree .c { padding-left: 8px; gap: 0; }
.htree .c i { width: 11px; height: 16px; border-left: 1px dotted #888; background: linear-gradient(90deg, #999 50%, transparent 50%) 0 8px / 2px 1px repeat-x; }
.htree .s i { height: 9px; align-self: flex-start; }
.htree .c span { flex: 1; display: flex; align-items: center; gap: 6px; height: 16px; }
.htree .s span { background: #0078d7; }
.hv { display: flex; flex-direction: column; align-items: center; padding-top: 3px; gap: 3px; }
.vthumb { width: 15px; height: 136px; background: #cdcdcd; }
.hv .a:last-child { margin-top: 14px; }
.hh { display: flex; align-items: center; gap: 4px; padding-left: 3px; }
.hthumb { width: 233px; height: 15px; background: #cdcdcd; }
.hh .a:last-child { margin-left: 15px; }

/* Status bar */
.status { height: 23px; display: flex; align-items: center; background: #fff; border-top: 2px solid #a0a0a0; border-bottom: 1px solid #bbb; }
.status span { border-right: 1px solid #999; padding-left: 6px; height: 16px; }
.status .s1 { width: 103px; padding-left: 5px; }
.s2 { width: 104px; }
.s3 { width: 44px; }
.s4 { width: 54px; }
.status strong { flex: 1; background: #fafa82; height: 18px; line-height: 18px; padding-left: 5px; margin-left: 1px; border-right: 1px solid #888; }
.s5 { width: 131px; }
.status .s6 { width: 121px; padding-left: 15px; background: linear-gradient(90deg, transparent 1px, #dcd67a 1px 9px, #888 9px 10px, transparent 10px); }
.status button { width: 20px; display: grid; place-items: center; }
.bin { width: 12px; height: 14px; }

/* Dialog window */
.dialog { position: absolute; left: 567px; top: 280px; width: 786px; height: 593px; background: #f0f0f0; border: 1px solid #3f84bd; box-shadow: 0 4px 14px rgba(0, 0, 0, .4); display: flex; flex-direction: column; }
.dtitle { display: flex; height: 30px; background: #fff; padding-left: 8px; }
.dtitle > .i16 { margin-top: 7px; }
.dtitle h2 { line-height: 30px; }
.dtitle .swap { background: linear-gradient(#f4f4f4, #c8c8c8); }
.dtitle .wb { height: 29px; }
.dtitle .wbtns { margin-right: 1px; }
.dialog .tools { height: 35px; padding-bottom: 4px; }
.dtabs { height: 20px; padding-left: 9px; flex: none; }
.dtabs .on { background: linear-gradient(#ffc98a, #ffac54); height: 20px; }
.dbody { flex: 1; display: flex; flex-direction: column; border: 2px solid #fdae57; padding: 1px 1px 52px 20px; }
.prices .first { width: 154px; }
.dialog .focus { background: #e5f1fb; border: 2px solid #0078d7; outline: 1px dotted #000; outline-offset: -3px; }
```
